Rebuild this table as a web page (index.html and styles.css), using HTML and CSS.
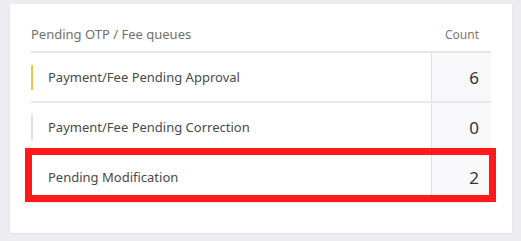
FILE: index.html
```html
<!DOCTYPE html>
<html>
<head>
<meta charset="utf-8">
<link rel="stylesheet" href="styles.css">
</head>
<body>
<div class="card">
  <div class="thead">
    <div class="th-name">Pending OTP / Fee queues</div>
    <div class="th-count">Count</div>
  </div>
  <div class="row">
    <div class="name"><span class="mark mark-yellow"></span>Payment/Fee Pending Approval</div>
    <div class="count">6</div>
  </div>
  <div class="row">
    <div class="name"><span class="mark mark-grey"></span>Payment/Fee Pending Correction</div>
    <div class="count">0</div>
  </div>
  <div class="row row-highlight">
    <div class="name"><span class="mark"></span>Pending Modification</div>
    <div class="count">2</div>
  </div>
</div>
</body>
</html>
```
FILE: styles.css
```css
html, body {
  margin: 0;
  padding: 0;
}
body {
  background: #ececf1;
  padding: 4px 9px 0 10px;
  font-family: "Noto Sans", "Open Sans", sans-serif;
  width: 521px;
  height: 241px;
  box-sizing: border-box;
}
.card {
  background: #fff;
  height: 229px;
  box-sizing: border-box;
  padding: 21px 21px 0 21px;
  box-shadow: 0 1px 2px rgba(0,0,0,0.06);
}
.thead {
  display: flex;
  justify-content: space-between;
  align-items: center;
  border-bottom: 2px solid #e6e6e8;
  padding-bottom: 8px;
  height: 18px;
}
.th-name {
  font-size: 13px;
  color: #707070;
}
.th-count {
  font-size: 12px;
  color: #7a7a7a;
  padding-right: 12px;
}
.row {
  display: flex;
  height: 48px;
  border-bottom: 2px solid #e9e9eb;
  position: relative;
}
.name {
  flex: 1;
  display: flex;
  align-items: center;
  font-size: 13px;
  color: #4a4a4a;
  border-right: 1px solid #e2e2e2;
}
.mark {
  width: 2px;
  height: 25px;
  margin-right: 15px;
}
.mark-yellow { background: #f6c443; }
.mark-grey { background: #e2e2e4; }
.count {
  width: 59px;
  background: #f8f8fa;
  display: flex;
  align-items: center;
  justify-content: flex-end;
  padding-right: 12px;
  box-sizing: border-box;
  font-size: 17px;
  color: #333;
}
.row-highlight::after {
  content: "";
  position: absolute;
  left: -6px;
  right: -5px;
  top: -5px;
  bottom: -1px;
  border: 7px solid #fe1a1a;
  pointer-events: none;
}
```
